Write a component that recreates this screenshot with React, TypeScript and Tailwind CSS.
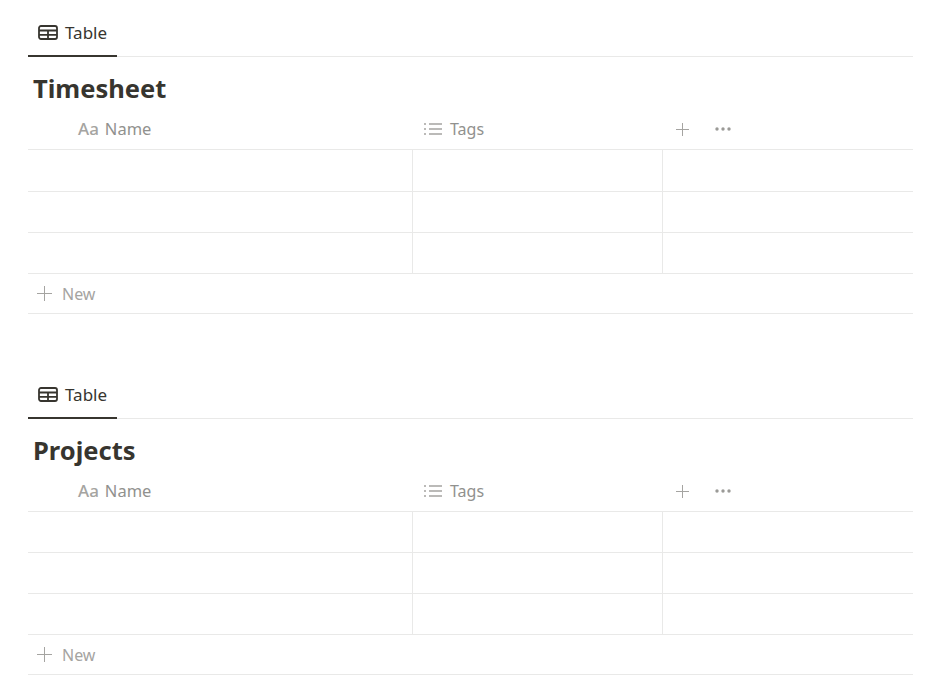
const TableIcon = () => (
  <svg width="20" height="15" viewBox="0 0 20 15" fill="none" stroke="#37352f" strokeWidth="1.8">
    <rect x="1" y="1" width="18" height="13" rx="2" />
    <path d="M1 5.5h18M1 9.8h18M10 5.5v8.5" />
  </svg>
);

const ListIcon = () => (
  <svg width="18" height="14" viewBox="0 0 18 14" fill="none" stroke="#a5a4a1" strokeWidth="1.3">
    <path d="M5 2h13M5 7h13M5 12h13" />
    <path d="M0 2h2M0 7h2M0 12h2" strokeWidth="1.6" />
  </svg>
);

const PlusIcon = ({ size }: { size: number }) => (
  <svg width={size} height={size} viewBox="0 0 14 14" fill="none" stroke="#a5a4a1" strokeWidth={14 / size}>
    <path d="M7 0v14M0 7h14" />
  </svg>
);

const DotsIcon = () => (
  <svg width="16" height="4" viewBox="0 0 16 4" fill="#9b9a97">
    <circle cx="2" cy="2" r="1.7" />
    <circle cx="8" cy="2" r="1.7" />
    <circle cx="14" cy="2" r="1.7" />
  </svg>
);

const Row = ({ tall }: { tall?: boolean }) => (
  <div className={`flex border-b border-[#e9e9e8] ${tall ? "h-[42px]" : "h-[41px]"}`}>
    <div className="w-[385px] border-r border-[#e9e9e8]" />
    <div className="w-[250px] border-r border-[#e9e9e8]" />
    <div className="flex-1" />
  </div>
);

const DatabaseBlock = ({ title, tallFirstRow }: { title: string; tallFirstRow?: boolean }) => (
  <div className="w-[885px]">
    {/* Tabs */}
    <div className="flex h-[39px] border-b border-[#e9e9e8]">
      <div className="flex h-[39px] w-[89px] items-center gap-[7px] border-b-2 border-[#37352f] pb-[8px] pl-[10px] text-[17px] text-[#37352f]">
        <TableIcon />
        <span>Table</span>
      </div>
    </div>

    <h2 className="h-[55px] pl-[5px] pt-[13px] text-[25.5px] leading-[36px] font-bold text-[#37352f]">{title}</h2>

    {/* Header */}
    <div className="flex h-[38px] items-center border-b border-[#e9e9e8] pb-[3px] text-[16.5px] text-[#91918e]">
      <div className="flex w-[385px] items-center pl-[50px]">
        <span className="mr-[6px] text-[17px] font-medium text-[#a5a4a1]">Aa</span>
        <span>Name</span>
      </div>
      <div className="flex w-[250px] items-center pl-[11px]">
        <ListIcon />
        <span className="ml-[8px] text-[16px]">Tags</span>
      </div>
      <div className="flex items-center pl-[13px]">
        <PlusIcon size={13} />
        <span className="ml-[26px] flex">
          <DotsIcon />
        </span>
      </div>
    </div>

    <Row tall={tallFirstRow} />
    <Row />
    <Row />

    {/* New row */}
    <div className="flex h-[40px] items-center border-b border-[#e9e9e8] pl-[9px] text-[16px] text-[#a5a4a1]">
      <PlusIcon size={15} />
      <span className="ml-[10px]">New</span>
    </div>
  </div>
);

export default function App() {
  return (
    <div className="flex h-[693px] w-[950px] flex-col gap-[66px] bg-white pl-[28px] pt-[18px] font-['Noto_Sans','Open_Sans',sans-serif]">
      <DatabaseBlock title="Timesheet" tallFirstRow />
      <DatabaseBlock title="Projects" />
    </div>
  );
}
